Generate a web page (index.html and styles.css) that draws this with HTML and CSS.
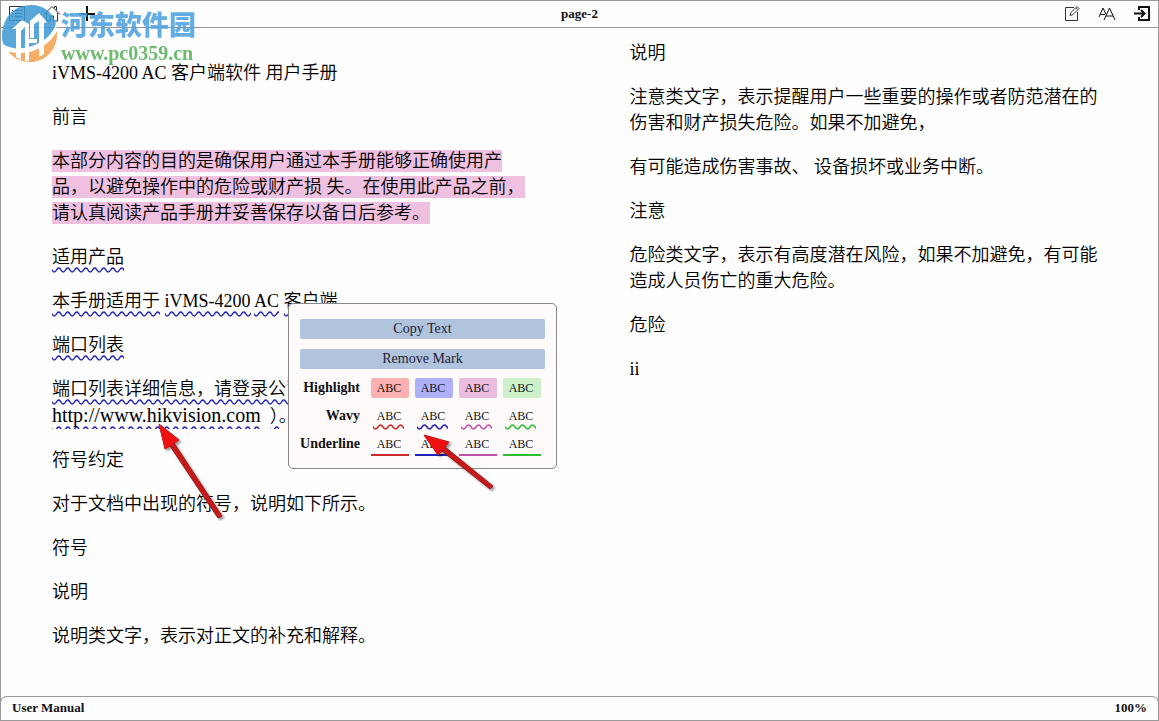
FILE: index.html
```html
<!DOCTYPE html>
<html lang="zh-CN">
<head>
    <meta charset="UTF-8">
    <meta name="viewport" content="width=device-width, initial-scale=1.0">
    <title>User Manual</title>
    <link rel="stylesheet" href="styles.css">
</head>
<body>
    <header class="toolbar">
        <div class="tools">
            <button class="tool" aria-label="Contents">
                <svg width="18" height="18" viewBox="0 0 18 18"><path d="M1.5 1.5h15v14h-15zM4 5.500h1M4 8.500h1M4 11.500h1M7 5.500h7M7 8.500h7M7 11.500h7"/></svg>
            </button>
            <button class="tool" aria-label="Home">
                <svg width="18" height="18" viewBox="0 0 18 18"><path d="M1 9.500L9 1.500l8 8M3.500 8v8h4v-5h3v5h4V8M13.500 5.500v-4h-2v2"/></svg>
            </button>
            <button class="tool" aria-label="Add">
                <svg width="18" height="18" viewBox="0 0 18 18"><path class="thick" d="M1 9h16M9 1v15"/></svg>
            </button>
        </div>
        <h1 class="page-title">page-2</h1>
        <div class="tools tools-right">
            <button class="tool" aria-label="Notes">
                <svg width="18" height="18" viewBox="0 0 18 18"><path d="M11 2.500H2.500v13h12V7M7 10.500l1-3 6-6 2 2-6 6zM13 3l1.500 1.500"/></svg>
            </button>
            <button class="tool" aria-label="Font size">
                <svg width="18" height="18" viewBox="0 0 18 18"><path class="medium" d="M1 12L5 3l3.500 7M2.500 9.500H7M6 15l5.500-12L17 15M8 11h7"/></svg>
            </button>
            <button class="tool" aria-label="Exit">
                <svg width="18" height="18" viewBox="0 0 18 18"><path class="thick" d="M6 5V2h10v13H6v-3M1 8.500h10M8 5l3.500 3.500L8 12"/></svg>
            </button>
        </div>
    </header>

    <main class="pages">
        <article class="page page-left">
            <p>iVMS-4200 AC 客户端软件 用户手册</p>
            <p>前言</p>
            <p><mark>本部分内容的目的是确保用户通过本手册能够正确使用产品，以避免操作中的危险或财产损 失。在使用此产品之前，请认真阅读产品手册并妥善保存以备日后参考。</mark></p>
            <p><span class="wavy">适用产品</span></p>
            <p><span class="wavy">本手册适用于</span> <span class="wavy">iVMS-4200</span> <span class="wavy">AC</span> <span class="wavy">客户端</span></p>
            <p><span class="wavy">端口列表</span></p>
            <p><span class="wavy">端口列表详细信息，请登录公司</span><br><span class="wavy wavy-cut url">http://www.hikvision.com</span> &nbsp;<span class="wavy wavy-cut">）</span>。</p>
            <p>符号约定</p>
            <p>对于文档中出现的符号，说明如下所示。</p>
            <p>符号</p>
            <p>说明</p>
            <p>说明类文字，表示对正文的补充和解释。</p>
        </article>
        <article class="page">
            <p>说明</p>
            <p>注意类文字，表示提醒用户一些重要的操作或者防范潜在的伤害和财产损失危险。如果不加避免，</p>
            <p>有可能造成伤害事故、 设备损坏或业务中断。</p>
            <p>注意</p>
            <p>危险类文字，表示有高度潜在风险，如果不加避免，有可能造成人员伤亡的重大危险。</p>
            <p>危险</p>
            <p>ii</p>
        </article>
    </main>

    <footer class="status">
        <span>User Manual</span>
        <span>100%</span>
    </footer>

    <div class="mark-menu">
        <button class="action">Copy Text</button>
        <button class="action">Remove Mark</button>
        <div class="mark-row" role="group" aria-labelledby="highlight">
            <span class="mark-label" id="highlight">Highlight</span>
            <button class="chip fill red">ABC</button>
            <button class="chip fill blue">ABC</button>
            <button class="chip fill pink">ABC</button>
            <button class="chip fill green">ABC</button>
        </div>
        <div class="mark-row" role="group" aria-labelledby="wavy">
            <span class="mark-label" id="wavy">Wavy</span>
            <button class="chip wave red">ABC</button>
            <button class="chip wave blue">ABC</button>
            <button class="chip wave pink">ABC</button>
            <button class="chip wave green">ABC</button>
        </div>
        <div class="mark-row" role="group" aria-labelledby="underline">
            <span class="mark-label" id="underline">Underline</span>
            <button class="chip line red">ABC</button>
            <button class="chip line blue">ABC</button>
            <button class="chip line pink">ABC</button>
            <button class="chip line green">ABC</button>
        </div>
    </div>

    <svg class="arrow arrow-link" width="72" height="104" viewBox="0 0 72 104">
        <path d="M2 2L22 18 17 21 65 94 61 96 13 24 8 27z"/>
        <path class="head" d="M2 2L22 18 8 27z"/>
    </svg>
    <svg class="arrow arrow-menu" width="78" height="64" viewBox="0 0 78 64">
        <path d="M2 2L27 9 23 14 71 53 68 56 20 18 16 22z"/>
        <path class="head" d="M2 2L27 9 16 22z"/>
    </svg>

    <div class="watermark">
        <svg width="58" height="62" viewBox="0 0 58 62">
            <path class="wm-blue" d="M1 37C0 17 12 3 30 3c12 0 22 7 25 19-5 14-14 22-27 25-10 2-19 2-25-2z"/>
            <path class="wm-orange" d="M56 29c1 17-9 29-24 31-13 1-23-5-27-15 9 4 19 4 28 1 10-3 18-9 23-17z"/>
            <path class="wm-white" d="M2 42c7 5 18 6 29 2 12-4 21-12 24-22l1 6c-4 10-13 17-24 21-10 3-20 3-28-1z"/>
            <path class="wm-white" d="M11 27l10-9 7 4v37h-4V25l-4 4v29l-5-3V27z"/>
            <path class="wm-white" d="M29 19l9-8 8 9-3 1v31l-5 3V19l-5 3v14h-4z"/>
            <path class="wm-white" d="M24 37h12v4H24z"/>
        </svg>
        <div class="wm-text">
            <span class="wm-name">河东软件园</span>
            <span class="wm-url">www.pc0359.cn</span>
        </div>
    </div>
</body>
</html>
```
FILE: styles.css
```css
* {
    box-sizing: border-box;
}

body {
    margin: 0;
    min-height: 100vh;
    display: flex;
    flex-direction: column;
    position: relative;
    border: 1px solid #999;
    background: #fefefe;
    color: #111;
    font-family: "Liberation Serif", "Noto Sans CJK SC", serif;
    font-size: 18px;
    line-height: 26px;
}

button {
    padding: 0;
    border: 0;
    background: none;
    color: inherit;
    font-family: inherit;
    cursor: pointer;
}

.toolbar {
    display: grid;
    grid-template-columns: 1fr auto 1fr;
    align-items: center;
    height: 27px;
    padding: 0 7px;
    border-bottom: 1px solid #999;
}

.tools {
    display: flex;
    gap: 17px;
}

.tools-right {
    justify-content: flex-end;
}

.tool {
    display: flex;
}

.tool path {
    fill: none;
    stroke: #333;
}

.tool .medium {
    stroke: #111;
}

.tool .thick {
    stroke: #111;
    stroke-width: 2;
}

.page-title {
    margin: 0;
    font-size: 13px;
    line-height: 20px;
}

.pages {
    flex: 1;
    display: grid;
    grid-template-columns: 1fr 1fr;
    gap: 100px;
    padding: 12px 51px 0;
    color: #000;
    font-weight: 350;
}

.page-left {
    padding-top: 20px;
}

.page p {
    margin: 0 0 18px;
}

mark {
    padding: 1px 0;
    background: #efc0e0;
    color: inherit;
}

.wavy {
    padding-bottom: 6px;
    background: url("data:image/svg+xml,%3Csvg xmlns='http://www.w3.org/2000/svg' width='9' height='6'%3E%3Cpath d='M-2.250 1C0 1 0 5 2.250 5S4.500 1 6.750 1s2.250 4 4.500 4' fill='none' stroke='%232222bb' stroke-width='1.500'/%3E%3C/svg%3E") repeat-x left bottom;
}

.wavy-cut {
    padding-bottom: 3px;
    background-position: left bottom -3px;
}

.url {
    font-size: 20px;
}

.status {
    display: flex;
    justify-content: space-between;
    margin: 0 -1px;
    padding: 0 11px 2px;
    border: 1px solid #999;
    border-bottom: 0;
    border-radius: 7px 7px 0 0;
    font-size: 13px;
    font-weight: bold;
    line-height: 21px;
}

.mark-menu {
    position: absolute;
    left: 287px;
    top: 302px;
    width: 269px;
    padding: 15px 11px 12px;
    border: 1px solid #888;
    border-radius: 5px;
    background: #fffafa;
    line-height: 20px;
}

.action {
    display: block;
    width: 100%;
    height: 20px;
    margin-bottom: 10px;
    border-radius: 2px;
    background: #b0c4de;
    color: #223;
    font-size: 14px;
    line-height: 20px;
}

.action + .mark-row {
    margin-top: -1px;
}

.mark-row {
    display: flex;
    gap: 6px;
    height: 20px;
    margin-bottom: 8px;
}

.mark-row:last-child {
    height: 22px;
    margin-bottom: 0;
}

.mark-label {
    width: 60px;
    margin-right: 5px;
    font-size: 14px;
    font-weight: bold;
    text-align: right;
}

.chip {
    width: 38px;
    height: 20px;
    padding-right: 2px;
    font-size: 12px;
    line-height: 20px;
}

.fill {
    border-radius: 2px;
}

.fill.red { background: #ffb0b0; }
.fill.blue { background: #b0b0fa; }
.fill.pink { background: #ebbcdf; }
.fill.green { background: #ccf0c8; }

.line {
    height: 22px;
    border-bottom: 2px solid;
}

.line.red { border-color: #cc2b2b; }
.line.blue { border-color: #2222bb; }
.line.pink { border-color: #c050a8; }
.line.green { border-color: #2fc02f; }

.wave {
    height: 24px;
}

.wave::after {
    content: "";
    display: block;
    width: 31px;
    height: 6px;
    margin: -2px 0 0 2px;
    -webkit-mask: url("data:image/svg+xml,%3Csvg xmlns='http://www.w3.org/2000/svg' width='10' height='6'%3E%3Cpath d='M-2.500 1C0 1 0 5 2.500 5S5 1 7.500 1 10 5 12.500 5' fill='none' stroke='%23000' stroke-width='1.500'/%3E%3C/svg%3E") repeat-x;
    mask: url("data:image/svg+xml,%3Csvg xmlns='http://www.w3.org/2000/svg' width='10' height='6'%3E%3Cpath d='M-2.500 1C0 1 0 5 2.500 5S5 1 7.500 1 10 5 12.500 5' fill='none' stroke='%23000' stroke-width='1.500'/%3E%3C/svg%3E") repeat-x;
}

.wave.red::after { background: #cc2b2b; }
.wave.blue::after { background: #2222bb; }
.wave.pink::after { background: #c050a8; }
.wave.green::after { background: #2fc02f; }

.arrow {
    position: absolute;
    filter: drop-shadow(2px 2px 1px rgba(0, 0, 0, 0.4));
    pointer-events: none;
}

.arrow path {
    fill: #c81818;
    stroke: #a01818;
}

.arrow .head {
    fill: #f01010;
    stroke: none;
}

.arrow-link {
    left: 156px;
    top: 421px;
}

.arrow-menu {
    left: 421px;
    top: 432px;
}

.watermark {
    position: absolute;
    left: 0;
    top: 1px;
    display: flex;
    gap: 2px;
    opacity: 0.85;
    pointer-events: none;
}

.wm-text {
    display: flex;
    flex-direction: column;
    padding-top: 3px;
}

.wm-name {
    color: #4aa0e0;
    font-family: "Noto Sans CJK SC", sans-serif;
    font-size: 27px;
    font-weight: 900;
    line-height: 38px;
}

.wm-url {
    color: #55b055;
    font-size: 20px;
    font-weight: bold;
    line-height: 20px;
}

.wm-blue { fill: #3b98d4; }
.wm-orange { fill: #f3a04c; }
.wm-white { fill: #fff; }
```
